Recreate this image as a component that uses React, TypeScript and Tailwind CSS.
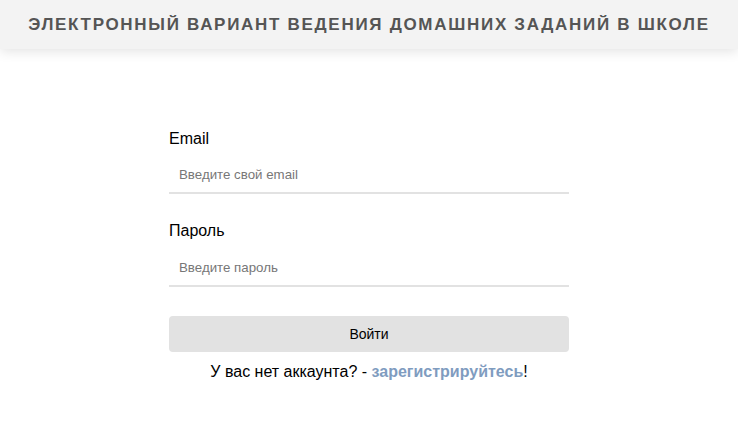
export default function App() {
  return (
    <div className="min-h-screen bg-white font-['Liberation_Sans',Arial,sans-serif]">
      <header className="flex h-[49px] items-center justify-center bg-[#f3f3f3] shadow-[0_2px_12px_rgba(0,0,0,0.12)]">
        <h1 className="text-[17px] font-bold uppercase tracking-[1.7px] text-[#555]">
          Электронный вариант ведения домашних заданий в школе
        </h1>
      </header>

      <form className="mx-auto mt-[78px] flex w-[400px] flex-col" onSubmit={(e) => e.preventDefault()}>
        <label className="text-base text-black">Email</label>
        <input
          className="mt-[10px] h-[33px] border-b-2 border-[#e2e2e2] px-[10px] pb-[4px] text-[13.3px] text-[#333] outline-none placeholder:text-[#777]"
          placeholder="Введите свой email"
        />

        <label className="mt-[25px] text-base text-black">Пароль</label>
        <input
          type="password"
          className="mt-[11px] h-[33px] border-b-2 border-[#e2e2e2] px-[10px] pb-[4px] text-[13.3px] text-[#333] outline-none placeholder:text-[#777]"
          placeholder="Введите пароль"
        />

        <button type="submit" className="mt-[29px] h-[36px] rounded-[4px] bg-[#e2e2e2] text-sm text-black">
          Войти
        </button>

        <p className="mt-[8px] text-center text-base text-black">
          У вас нет аккаунта? - <a className="font-bold text-[#7f9cbf]" href="#">зарегистрируйтесь</a>!
        </p>
      </form>
    </div>
  );
}
